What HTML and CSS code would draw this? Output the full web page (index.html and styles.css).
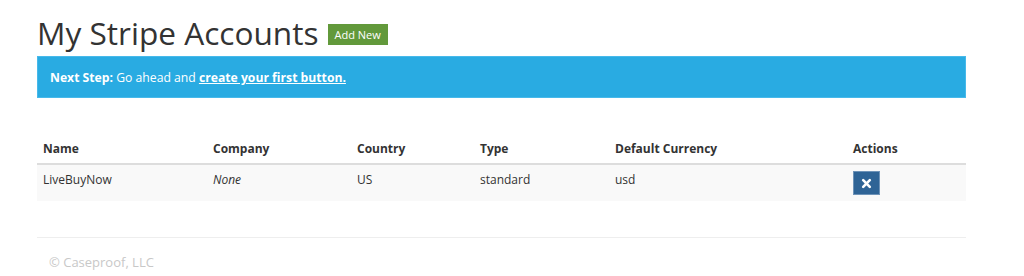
FILE: index.html
```html
<!DOCTYPE html>
<html lang="en">
<head>
  <meta charset="UTF-8">
  <title>My Stripe Accounts</title>
  <link rel="stylesheet" href="styles.css">
</head>
<body>
  <div class="wrap">
    <div class="page-head">
      <h1>My Stripe Accounts</h1>
      <a class="add-new" href="#">Add New</a>
    </div>

    <div class="notice">
      <strong>Next Step:</strong> Go ahead and <a href="#">create your first button.</a>
    </div>

    <table class="accounts">
      <thead>
        <tr>
          <th class="col-name">Name</th>
          <th class="col-company">Company</th>
          <th class="col-country">Country</th>
          <th class="col-type">Type</th>
          <th class="col-currency">Default Currency</th>
          <th class="col-actions">Actions</th>
        </tr>
      </thead>
      <tbody>
        <tr>
          <td>LiveBuyNow</td>
          <td><em>None</em></td>
          <td>US</td>
          <td>standard</td>
          <td>usd</td>
          <td>
            <button class="btn-delete" title="Delete">
              <svg width="11" height="11" viewBox="0 0 11 11">
                <path d="M2.2 2.2 L8.8 8.8 M8.8 2.2 L2.2 8.8" stroke="#fff" stroke-width="2.6" stroke-linecap="round"/>
              </svg>
            </button>
          </td>
        </tr>
      </tbody>
    </table>

    <div class="footer">&copy; Caseproof, LLC</div>
  </div>
</body>
</html>
```

FILE: styles.css
```css
body {
  margin: 0;
  padding: 0;
  background-color: #fff;
  color: #333;
  font-family: "Open Sans", "Liberation Sans", sans-serif;
  font-size: 12px;
}

.wrap {
  width: 929px;
  margin-left: 37px;
}

.page-head {
  display: flex;
  align-items: center;
  gap: 9px;
  height: 46px;
  padding-top: 10px;
}

.page-head h1 {
  margin: 0;
  font-size: 31.6px;
  font-weight: 400;
  line-height: 42px;
  color: #333;
}

.add-new {
  display: inline-block;
  margin-top: 2px;
  padding: 0 7px;
  height: 21px;
  line-height: 21px;
  background-color: #62993b;
  color: #fff;
  font-size: 11px;
  text-decoration: none;
}

.notice {
  padding: 1px 12px 0;
  line-height: 39px;
  background-color: #29abe2;
  color: #fff;
  font-size: 12.2px;
  border: 1px solid #47b9ea;
}

.notice strong {
  font-weight: 700;
}

.notice a {
  color: #fff;
  font-weight: 700;
  text-decoration: underline;
}

.accounts {
  width: 100%;
  margin-top: 39px;
  border-collapse: collapse;
}

.accounts th {
  text-align: left;
  font-weight: 700;
  padding: 3px 6px 6px;
  line-height: 17px;
  border-bottom: 2px solid #ddd;
}

.accounts td {
  padding: 6px;
  line-height: 17px;
  vertical-align: top;
  background-color: #f9f9f9;
}

.col-name { width: 158px; }
.col-company { width: 132px; }
.col-country { width: 111px; }
.col-type { width: 123px; }
.col-currency { width: 226px; }

.btn-delete {
  display: flex;
  align-items: center;
  justify-content: center;
  width: 27px;
  height: 24px;
  padding: 0;
  background-color: #2f6496;
  border: 1px solid #6e93b8;
  cursor: pointer;
}

.footer {
  margin-top: 36px;
  border-top: 1px solid #eee;
  padding: 15px 12px;
  color: #c8c8c8;
  font-size: 13px;
}
```
